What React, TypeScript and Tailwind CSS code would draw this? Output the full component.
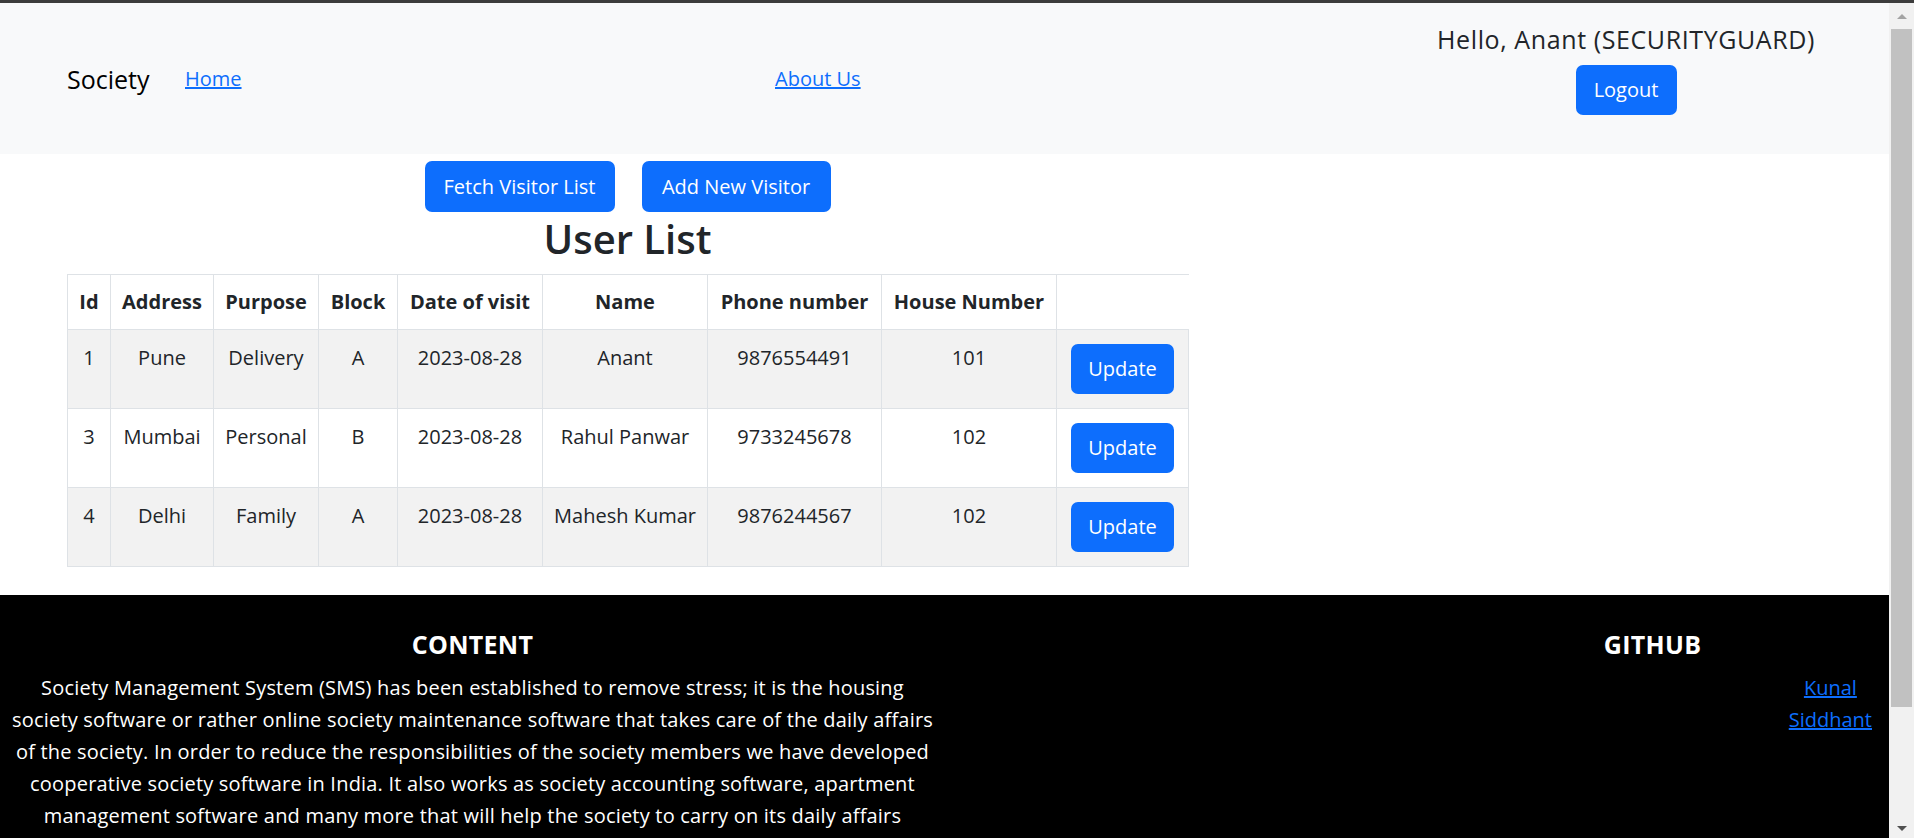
import React from "react";

interface Visitor {
  id: number;
  address: string;
  purpose: string;
  block: string;
  date: string;
  name: string;
  phone: string;
  house: string;
}

const visitors: Visitor[] = [
  { id: 1, address: "Pune", purpose: "Delivery", block: "A", date: "2023-08-28", name: "Anant", phone: "9876554491", house: "101" },
  { id: 3, address: "Mumbai", purpose: "Personal", block: "B", date: "2023-08-28", name: "Rahul Panwar", phone: "9733245678", house: "102" },
  { id: 4, address: "Delhi", purpose: "Family", block: "A", date: "2023-08-28", name: "Mahesh Kumar", phone: "9876244567", house: "102" },
];

const headers = [
  { label: "Id", w: "w-[43px]" },
  { label: "Address", w: "w-[103px]" },
  { label: "Purpose", w: "w-[105px]" },
  { label: "Block", w: "w-[79px]" },
  { label: "Date of visit", w: "w-[145px]" },
  { label: "Name", w: "w-[165px]" },
  { label: "Phone number", w: "w-[174px]" },
  { label: "House Number", w: "w-[175px]" },
];

function Scrollbar() {
  return (
    <div className="w-[25px] shrink-0 bg-[#f1f1f1] flex flex-col items-center">
      <div className="h-[26px] flex items-center justify-center">
        <div className="w-0 h-0 border-l-[5px] border-r-[5px] border-b-[5px] border-l-transparent border-r-transparent border-b-[#a3a3a3]" />
      </div>
      <div className="w-[21px] h-[678px] bg-[#c1c1c1]" />
      <div className="flex-1" />
      <div className="h-[20px] flex items-center justify-center">
        <div className="w-0 h-0 border-l-[5px] border-r-[5px] border-t-[5px] border-l-transparent border-r-transparent border-t-[#505050]" />
      </div>
    </div>
  );
}

export default function App() {
  return (
    <div className="h-[838px] overflow-hidden flex flex-col bg-white text-[20px] leading-[30px] text-[#212529] font-['Open_Sans','Noto_Sans',sans-serif]">
      <div className="h-[3px] shrink-0 bg-[#3c3c3c]" />
      <div className="flex flex-1 min-h-0">
        <div className="flex-1 min-w-0 overflow-hidden">
          {/* navbar */}
          <nav className="h-[151px] bg-[#f8f9fa] flex items-start">
            <div className="flex items-center pl-[67px] mt-[57px]">
              <span className="w-[118px] text-[25px] leading-[38px] text-black">Society</span>
              <a href="#" className="w-[590px] text-[#0d6efd] underline">
                Home
              </a>
              <a href="#" className="text-[#0d6efd] underline">
                About Us
              </a>
            </div>
            <div className="ml-auto mr-[74px] mt-[21px] flex flex-col items-center">
              <h5 className="text-[25px] leading-[30px] font-medium tracking-[0.6px]">Hello, Anant (SECURITYGUARD)</h5>
              <button className="mt-[11px] h-[50px] w-[101px] rounded-[7px] bg-[#0d6efd] text-white">Logout</button>
            </div>
          </nav>

          {/* visitor list */}
          <div className="ml-[67px] w-[1121px] text-center pt-[7px]">
            <div className="flex justify-center gap-[27px]">
              <button className="h-[51px] w-[190px] rounded-[7px] bg-[#0d6efd] text-white">Fetch Visitor List</button>
              <button className="h-[51px] w-[189px] rounded-[7px] bg-[#0d6efd] text-white">Add New Visitor</button>
            </div>
            <h2 className="text-[40px] leading-[50px] font-semibold mt-[2px] mb-[10px]">User List</h2>
            <table className="w-[1121px] table-fixed border-collapse">
              <thead>
                <tr className="border-t border-[#dee2e6]">
                  {headers.map((h) => (
                    <th key={h.label} className={`${h.w} border-x border-[#dee2e6] py-[12px] px-0 font-bold whitespace-nowrap`}>
                      {h.label}
                    </th>
                  ))}
                  <th className="w-[132px]" />
                </tr>
              </thead>
              <tbody>
                {visitors.map((v, i) => (
                  <tr key={v.id} className={`border-y border-[#dee2e6] align-top ${i % 2 === 0 ? "bg-[#f2f2f2]" : "bg-white"}`}>
                    <td className="border-x border-[#dee2e6] pt-[13px]">{v.id}</td>
                    <td className="border-x border-[#dee2e6] pt-[13px]">{v.address}</td>
                    <td className="border-x border-[#dee2e6] pt-[13px]">{v.purpose}</td>
                    <td className="border-x border-[#dee2e6] pt-[13px]">{v.block}</td>
                    <td className="border-x border-[#dee2e6] pt-[13px]">{v.date}</td>
                    <td className="border-x border-[#dee2e6] pt-[13px] whitespace-nowrap">{v.name}</td>
                    <td className="border-x border-[#dee2e6] pt-[13px]">{v.phone}</td>
                    <td className="border-x border-[#dee2e6] pt-[13px]">{v.house}</td>
                    <td className="border-x border-[#dee2e6] py-[14px]">
                      <button className="h-[50px] w-[103px] rounded-[7px] bg-[#0d6efd] text-white">Update</button>
                    </td>
                  </tr>
                ))}
              </tbody>
            </table>
          </div>

          {/* footer */}
          <footer className="mt-[28px] bg-black text-white flex pt-[34px] pb-[40px]">
            <div className="w-[945px] shrink-0 px-[6px] text-center">
              <h5 className="text-[25px] leading-[30px] font-bold tracking-[0.3px] mb-[13px]">CONTENT</h5>
              <p className="leading-[32px] tracking-[0.2px]">
                Society Management System (SMS) has been established to remove stress; it is the housing society
                software or rather online society maintenance software that takes care of the daily affairs of the
                society. In order to reduce the responsibilities of the society members we have developed cooperative
                society software in India. It also works as society accounting software, apartment management software
                and many more that will help the society to carry on its daily affairs
              </p>
            </div>
            <div className="flex-1" />
            <div className="w-[473px] shrink-0 flex flex-col">
              <h5 className="text-center text-[25px] leading-[30px] font-bold tracking-[0.3px] mb-[13px]">GITHUB</h5>
              <div className="flex justify-end pr-[17px] leading-[32px]">
                <ul className="flex flex-col items-center">
                  <li>
                    <a href="#" className="text-[#0d6efd] underline">Kunal</a>
                  </li>
                  <li>
                    <a href="#" className="text-[#0d6efd] underline">Siddhant</a>
                  </li>
                </ul>
              </div>
            </div>
          </footer>
        </div>
        <Scrollbar />
      </div>
    </div>
  );
}
